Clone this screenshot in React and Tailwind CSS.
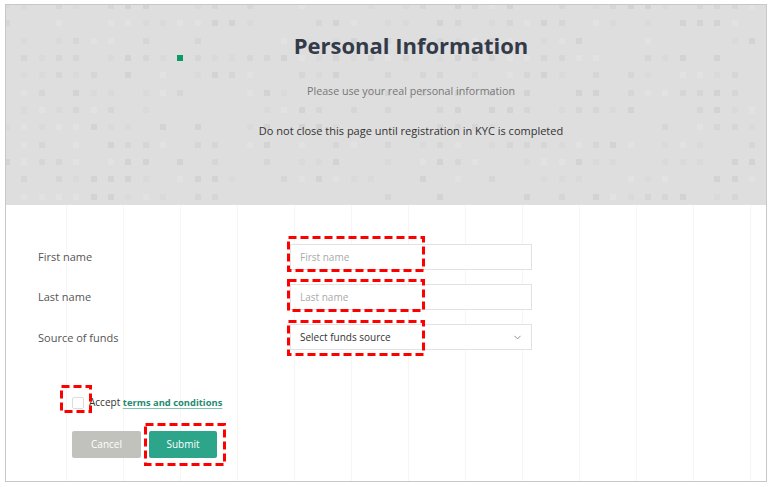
import React from "react";
import { ChevronDown } from "lucide-react";

const dotColors = [
  "bg-transparent",
  "bg-transparent",
  "bg-[#d6d6d6]",
  "bg-[#d3d3d3]",
  "bg-[#e2e2e2]",
  "bg-[#dadada]",
];

// deterministic pattern for the header squares
const makeDots = () => {
  let seed = 17;
  const next = () => {
    seed = (seed * 9301 + 49297) % 233280;
    return seed / 233280;
  };
  const dots = [];
  for (let r = 0; r < 12; r++) {
    for (let c = 0; c < 45; c++) {
      dots.push(dotColors[Math.floor(next() * dotColors.length)]);
    }
  }
  return dots;
};

const dots = makeDots();
const lines = Array.from({ length: 13 });

const FormRow = ({ label, children }) => (
  <div className="flex items-center h-[26px]">
    <div className="w-[252px] pt-[2px] text-[11px] text-[#555]">{label}</div>
    <div className="w-[242px]">{children}</div>
  </div>
);

// red dashed annotation boxes drawn over the form
const Marker = ({ className, w, h }) => (
  <svg
    width={w}
    height={h}
    className={`absolute pointer-events-none ${className}`}
  >
    <rect
      x="1.5"
      y="1.5"
      width={w - 3}
      height={h - 3}
      fill="none"
      stroke="#ff0000"
      strokeWidth="3"
      strokeDasharray="8 4"
    />
  </svg>
);

const App = () => {
  return (
    <div
      className="w-[773px] h-[487px] bg-white pt-[4px] pl-[5px]"
      style={{ fontFamily: '"Open Sans", "Noto Sans", sans-serif' }}
    >
      <div className="w-[762px] h-[478px] border border-[#c8c8c8] flex flex-col overflow-hidden">
        {/* Header */}
        <div className="relative h-[200px] bg-[#dedede] overflow-hidden">
          <div className="absolute left-[-2px] top-[-2px] grid grid-cols-[repeat(45,6px)] gap-[11.33px]">
            {dots.map((cls, i) => (
              <div
                key={i}
                className={`w-[6px] h-[6px] ${i === 10 + 45 * 3 ? "bg-[#0b9a63]" : cls}`}
              />
            ))}
          </div>
          <div className="relative flex flex-col items-center pl-[50px] pt-[25px]">
            <h1 className="text-[22px] font-bold text-[#333a48] leading-[30px]">
              Personal Information
            </h1>
            <p className="mt-[23px] text-[10.7px] text-[#777]">
              Please use your real personal information
            </p>
            <p className="mt-[24px] text-[11px] text-[#333]">
              Do not close this page until registration in KYC is completed
            </p>
          </div>
        </div>

        {/* Form */}
        <div className="relative flex-1">
          <div className="absolute inset-0 flex pl-[60px] gap-[56px] pointer-events-none">
            {lines.map((_, i) => (
              <div key={i} className="w-px h-full bg-[#f6f6f6]" />
            ))}
          </div>

          <div className="relative pl-[32px] pt-[38px] flex flex-col gap-[14.5px]">
            <FormRow label="First name">
              <input
                placeholder="First name"
                className="w-full h-[26px] border border-[#e2e2e2] bg-white px-[9px] text-[10px] text-[#333] placeholder:text-[#aaa] outline-none"
              />
            </FormRow>
            <FormRow label="Last name">
              <input
                placeholder="Last name"
                className="w-full h-[26px] border border-[#e2e2e2] bg-white px-[9px] text-[10px] text-[#333] placeholder:text-[#aaa] outline-none"
              />
            </FormRow>
            <FormRow label="Source of funds">
              <div className="w-full h-[26px] border border-[#e2e2e2] bg-white pl-[9px] pr-[8px] flex items-center justify-between text-[10px] text-[#333]">
                <span>Select funds source</span>
                <ChevronDown size={11} strokeWidth={2} className="text-[#888]" />
              </div>
            </FormRow>
          </div>

          <div className="relative pl-[66px] mt-[45px] flex items-center gap-[5px] text-[10px]">
            <div className="w-[12px] h-[12px] border border-[#ddd] rounded-[2px] bg-white" />
            <span className="text-[#333]">
              Accept{" "}
              <a className="font-bold text-[9.4px] text-[#1f8a70] underline decoration-[#7cc4b0] underline-offset-2">
                terms and conditions
              </a>
            </span>
          </div>

          <div className="relative pl-[66px] mt-[21px] flex gap-[8px]">
            <button className="w-[69px] h-[27px] rounded-[2px] bg-[#c2c2bd] text-white text-[10px]">
              Cancel
            </button>
            <button className="w-[68px] h-[27px] rounded-[2px] bg-[#2ca58a] text-white text-[10px]">
              Submit
            </button>
          </div>

          <Marker className="left-[281px] top-[31px]" w={138} h={36} />
          <Marker className="left-[281px] top-[74px]" w={138} h={33} />
          <Marker className="left-[281px] top-[115px]" w={138} h={36} />
          <Marker className="left-[54px] top-[180px]" w={32} h={28} />
          <Marker className="left-[138px] top-[218px]" w={82} h={43} />
        </div>
      </div>
    </div>
  );
};

export default App;
